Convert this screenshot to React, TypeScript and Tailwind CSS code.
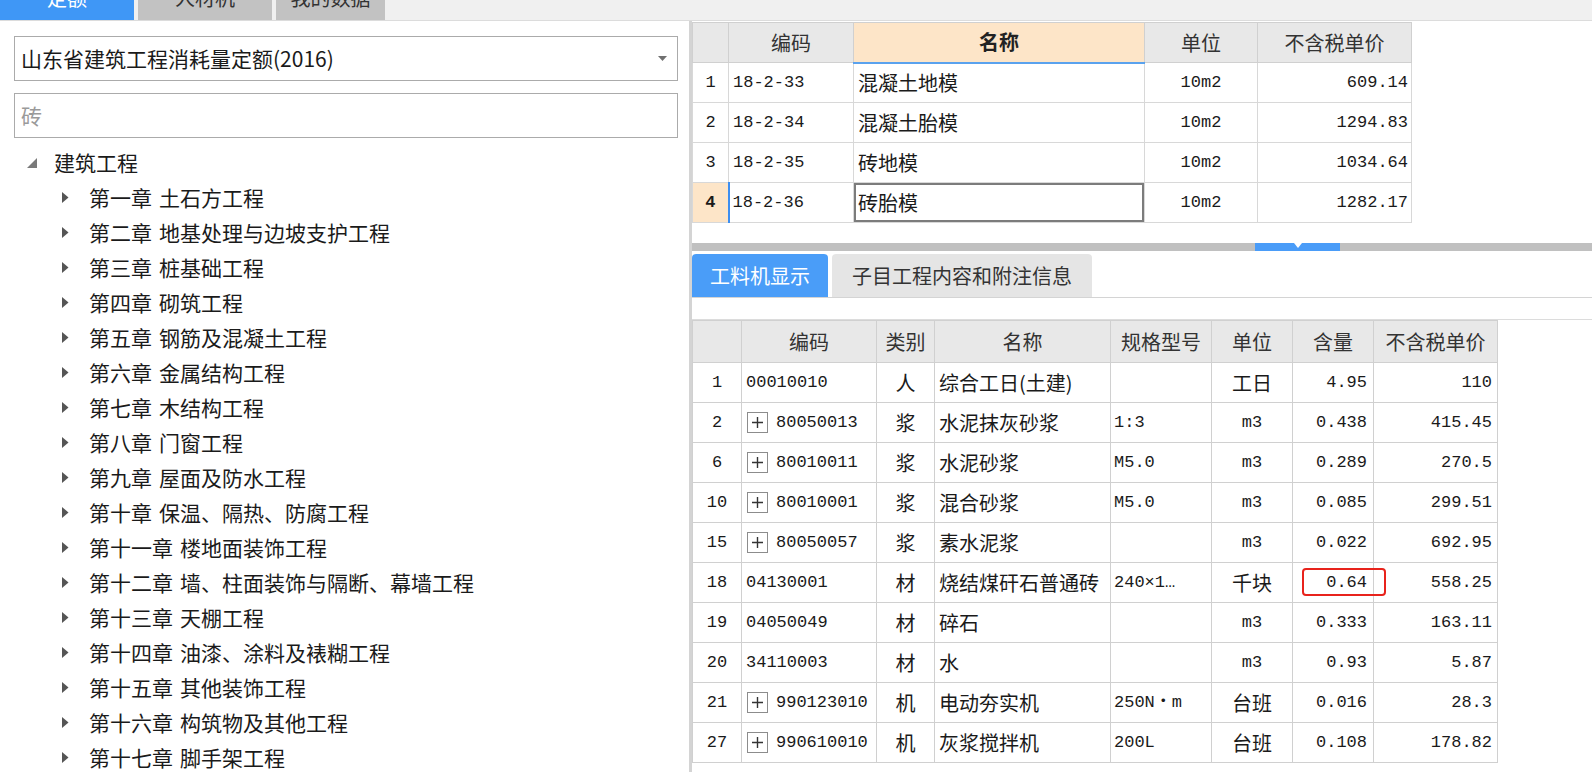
import React from 'react';

const CJK = "font-['Noto_Sans_CJK_SC','Microsoft_YaHei',sans-serif]";
const MONO = "font-['Liberation_Mono','Noto_Sans_CJK_SC',monospace]";

const hasCJK = (s: string) => /[\u4e00-\u9fff]/.test(s);

const chapters = [
  '第一章 土石方工程',
  '第二章 地基处理与边坡支护工程',
  '第三章 桩基础工程',
  '第四章 砌筑工程',
  '第五章 钢筋及混凝土工程',
  '第六章 金属结构工程',
  '第七章 木结构工程',
  '第八章 门窗工程',
  '第九章 屋面及防水工程',
  '第十章 保温、隔热、防腐工程',
  '第十一章 楼地面装饰工程',
  '第十二章 墙、柱面装饰与隔断、幕墙工程',
  '第十三章 天棚工程',
  '第十四章 油漆、涂料及裱糊工程',
  '第十五章 其他装饰工程',
  '第十六章 构筑物及其他工程',
  '第十七章 脚手架工程',
];

const quotaRows = [
  ['1', '18-2-33', '混凝土地模', '10m2', '609.14'],
  ['2', '18-2-34', '混凝土胎模', '10m2', '1294.83'],
  ['3', '18-2-35', '砖地模', '10m2', '1034.64'],
  ['4', '18-2-36', '砖胎模', '10m2', '1282.17'],
];

type Res = {
  no: string;
  plus: boolean;
  code: string;
  type: string;
  name: string;
  spec: string;
  unit: string;
  qty: string;
  price: string;
};

const resRows: Res[] = [
  { no: '1', plus: false, code: '00010010', type: '人', name: '综合工日(土建)', spec: '', unit: '工日', qty: '4.95', price: '110' },
  { no: '2', plus: true, code: '80050013', type: '浆', name: '水泥抹灰砂浆', spec: '1:3', unit: 'm3', qty: '0.438', price: '415.45' },
  { no: '6', plus: true, code: '80010011', type: '浆', name: '水泥砂浆', spec: 'M5.0', unit: 'm3', qty: '0.289', price: '270.5' },
  { no: '10', plus: true, code: '80010001', type: '浆', name: '混合砂浆', spec: 'M5.0', unit: 'm3', qty: '0.085', price: '299.51' },
  { no: '15', plus: true, code: '80050057', type: '浆', name: '素水泥浆', spec: '', unit: 'm3', qty: '0.022', price: '692.95' },
  { no: '18', plus: false, code: '04130001', type: '材', name: '烧结煤矸石普通砖', spec: '240×1…', unit: '千块', qty: '0.64', price: '558.25' },
  { no: '19', plus: false, code: '04050049', type: '材', name: '碎石', spec: '', unit: 'm3', qty: '0.333', price: '163.11' },
  { no: '20', plus: false, code: '34110003', type: '材', name: '水', spec: '', unit: 'm3', qty: '0.93', price: '5.87' },
  { no: '21', plus: true, code: '990123010', type: '机', name: '电动夯实机', spec: '250N・m', unit: '台班', qty: '0.016', price: '28.3' },
  { no: '27', plus: true, code: '990610010', type: '机', name: '灰浆搅拌机', spec: '200L', unit: '台班', qty: '0.108', price: '178.82' },
];

const txt = (s: string) => (hasCJK(s) ? `${CJK} text-[20px]` : `${MONO} text-[17px]`);

const PlusBox = () => (
  <span className="inline-flex w-[21px] h-[21px] border border-[#8c8c8c] items-center justify-center mr-[8px] shrink-0">
    <svg width="13" height="13" viewBox="0 0 13 13">
      <path d="M6.5 1 V12 M1 6.5 H12" stroke="#333" strokeWidth="1.4" />
    </svg>
  </span>
);

const App: React.FC = () => {
  return (
    <div className={`w-[1592px] h-[772px] bg-white flex flex-col overflow-hidden text-[#1a1a1a] ${CJK}`}>
      {/* top tabs, cut off at the window edge */}
      <div className="h-[21px] bg-[#f0f0f0] border-b border-[#dcdcdc] flex gap-[4px] shrink-0">
        <div className="w-[134px] h-[20px] bg-[#3f97f6] text-white flex items-end justify-center overflow-hidden">
          <span className="text-[20px] leading-[20px] mb-[12px]">定额</span>
        </div>
        <div className="w-[134px] h-[20px] bg-[#c2c2c2] text-[#333] flex items-end justify-center overflow-hidden">
          <span className="text-[20px] leading-[20px] mb-[12px]">人材机</span>
        </div>
        <div className="w-[109px] h-[20px] bg-[#c2c2c2] text-[#333] flex items-end justify-center overflow-hidden">
          <span className="text-[20px] leading-[20px] mb-[12px]">我的数据</span>
        </div>
      </div>

      <div className="flex flex-1 min-h-0">
        {/* left: quota library tree */}
        <div className="w-[689px] shrink-0 flex flex-col pt-[15px] overflow-hidden">
          <div className="ml-[14px] mr-[11px] h-[45px] shrink-0 border border-[#ababab] flex items-center pl-[6px] pr-[10px]">
            <span className="flex-1 text-[21px] text-[#1a1a1a]">山东省建筑工程消耗量定额(2016)</span>
            <svg width="9" height="5" viewBox="0 0 9 5">
              <path d="M0 0 H9 L4.5 5 Z" fill="#707070" />
            </svg>
          </div>
          <div className="ml-[14px] mr-[11px] mt-[12px] h-[45px] shrink-0 border border-[#ababab] flex items-center pl-[6px]">
            <span className="text-[21px] text-[#9a9a9a]">砖</span>
          </div>
          <div className="mt-[7px] flex flex-col shrink-0">
            <div className="h-[35px] shrink-0 flex items-center">
              <svg className="ml-[27px]" width="10" height="10" viewBox="0 0 10 10">
                <path d="M10 0 V10 H0 Z" fill="#7a7a7a" />
              </svg>
              <span className="ml-[17px] text-[21px]">建筑工程</span>
            </div>
            {chapters.map((c) => {
              const [head, rest] = c.split(' ');
              return (
                <div key={c} className="h-[35px] shrink-0 flex items-center">
                  <svg className="ml-[62px]" width="7" height="11" viewBox="0 0 7 11">
                    <path d="M0 0 L6.5 5.5 L0 11 Z" fill="#555" />
                  </svg>
                  <span className="ml-[20px] text-[21px] whitespace-nowrap">{head}</span>
                  <span className="ml-[7px] text-[21px] whitespace-nowrap">{rest}</span>
                </div>
              );
            })}
          </div>
        </div>

        <div className="w-[3px] bg-[#d4d4d4] shrink-0" />

        {/* right side */}
        <div className="flex-1 flex flex-col min-w-0">
          <div className="h-[222px] pt-[1px] shrink-0">
            <table className="w-[719px] border-collapse table-fixed">
              <colgroup>
                <col className="w-[36px]" />
                <col className="w-[125px]" />
                <col className="w-[291px]" />
                <col className="w-[113px]" />
                <col className="w-[154px]" />
              </colgroup>
              <thead>
                <tr className="h-[40px] text-[20px] text-[#333]">
                  <th className="border border-[#d0d0d0] bg-[#e8e8e8] font-normal" />
                  <th className="border border-[#d0d0d0] bg-[#e8e8e8] font-normal">编码</th>
                  <th className="border border-[#d0d0d0] border-b-2 border-b-[#5aa2ee] bg-[#fde5c8] font-bold text-[#222]">名称</th>
                  <th className="border border-[#d0d0d0] bg-[#e8e8e8] font-normal">单位</th>
                  <th className="border border-[#d0d0d0] bg-[#e8e8e8] font-normal">不含税单价</th>
                </tr>
              </thead>
              <tbody>
                {quotaRows.map((r) => {
                  const active = r[0] === '4';
                  return (
                    <tr key={r[0]} className="h-[40px]">
                      <td
                        className={
                          active
                            ? `border border-[#d8d8d8] bg-[#fde5c8] text-center font-bold ${MONO} text-[17px]`
                            : `border border-[#d8d8d8] text-center ${MONO} text-[17px]`
                        }
                      >
                        {r[0]}
                      </td>
                      <td
                        className={
                          active
                            ? `border border-[#d8d8d8] border-l-2 border-l-[#3d8ef0] pl-[3px] ${MONO} text-[17px]`
                            : `border border-[#d8d8d8] pl-[4px] ${MONO} text-[17px]`
                        }
                      >
                        {r[1]}
                      </td>
                      <td
                        className={
                          active
                            ? 'border border-[#d8d8d8] pl-[4px] text-[20px] shadow-[inset_0_0_0_2px_#7c7c7c]'
                            : 'border border-[#d8d8d8] pl-[4px] text-[20px]'
                        }
                      >
                        {r[2]}
                      </td>
                      <td className={`border border-[#d8d8d8] text-center ${MONO} text-[17px]`}>{r[3]}</td>
                      <td className={`border border-[#d8d8d8] text-right pr-[3px] ${MONO} text-[17px]`}>{r[4]}</td>
                    </tr>
                  );
                })}
              </tbody>
            </table>
          </div>

          {/* splitter */}
          <div className="h-[8px] bg-[#c0c0c0] flex shrink-0">
            <div className="ml-[563px] w-[85px] h-[8px] bg-[#4a9cf8] flex items-start justify-center">
              <svg width="8" height="5" viewBox="0 0 8 5">
                <path d="M0 0 H8 L4 5 Z" fill="#fff" />
              </svg>
            </div>
          </div>

          {/* lower tabs */}
          <div className="pt-[3px] flex gap-[4px] border-b border-[#d4d4d4] shrink-0">
            <div className="w-[136px] h-[43px] bg-[#4a9df8] rounded-t-[4px] text-white text-[20px] flex items-center justify-center">
              工料机显示
            </div>
            <div className="w-[260px] h-[43px] bg-[#e5e5e5] rounded-t-[4px] text-[#333] text-[20px] flex items-center justify-center">
              子目工程内容和附注信息
            </div>
          </div>
          <div className="h-[22px] border-b border-[#dcdcdc] shrink-0" />

          <table className="w-[805px] border-collapse table-fixed">
            <colgroup>
              <col className="w-[49px]" />
              <col className="w-[135px]" />
              <col className="w-[58px]" />
              <col className="w-[176px]" />
              <col className="w-[101px]" />
              <col className="w-[81px]" />
              <col className="w-[81px]" />
              <col className="w-[124px]" />
            </colgroup>
            <thead>
              <tr className="h-[42px] text-[20px] text-[#333]">
                <th className="border border-[#d0d0d0] bg-[#e8e8e8] font-normal" />
                <th className="border border-[#d0d0d0] bg-[#e8e8e8] font-normal">编码</th>
                <th className="border border-[#d0d0d0] bg-[#e8e8e8] font-normal">类别</th>
                <th className="border border-[#d0d0d0] bg-[#e8e8e8] font-normal">名称</th>
                <th className="border border-[#d0d0d0] bg-[#e8e8e8] font-normal">规格型号</th>
                <th className="border border-[#d0d0d0] bg-[#e8e8e8] font-normal">单位</th>
                <th className="border border-[#d0d0d0] bg-[#e8e8e8] font-normal">含量</th>
                <th className="border border-[#d0d0d0] bg-[#e8e8e8] font-normal">不含税单价</th>
              </tr>
            </thead>
            <tbody>
              {resRows.map((r) => (
                <tr key={r.no} className="h-[40px]">
                  <td className={`border border-[#d0d0d0] text-center ${MONO} text-[17px]`}>{r.no}</td>
                  <td className={`border border-[#d0d0d0] ${MONO} text-[17px]`}>
                    {r.plus ? (
                      <div className="flex items-center pl-[5px]">
                        <PlusBox />
                        <span>{r.code}</span>
                      </div>
                    ) : (
                      <div className="pl-[4px]">{r.code}</div>
                    )}
                  </td>
                  <td className="border border-[#d0d0d0] text-center text-[20px]">{r.type}</td>
                  <td className="border border-[#d0d0d0] pl-[4px] text-[20px] whitespace-nowrap overflow-hidden">{r.name}</td>
                  <td className={`border border-[#d0d0d0] pl-[3px] whitespace-nowrap overflow-hidden ${MONO} text-[17px]`}>{r.spec}</td>
                  <td className={`border border-[#d0d0d0] text-center ${txt(r.unit)}`}>{r.unit}</td>
                  <td className={`border border-[#d0d0d0] text-right pr-[6px] relative ${MONO} text-[17px]`}>
                    {r.qty}
                    {r.no === '18' && (
                      <div className="absolute left-[9px] top-[5px] w-[84px] h-[28px] border-2 border-[#e8231c] rounded-[4px]" />
                    )}
                  </td>
                  <td className={`border border-[#d0d0d0] text-right pr-[5px] ${MONO} text-[17px]`}>{r.price}</td>
                </tr>
              ))}
            </tbody>
          </table>
        </div>
      </div>
    </div>
  );
};

export default App;
